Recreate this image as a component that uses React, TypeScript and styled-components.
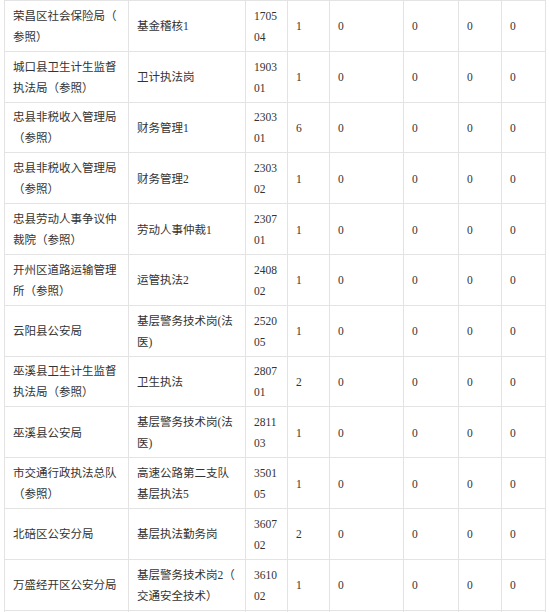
import styled, { createGlobalStyle } from 'styled-components';

const GlobalStyle = createGlobalStyle`
  html, body {
    margin: 0;
    padding: 0;
    background: #fff;
  }
`;

const Page = styled.div`
  height: 612px;
  overflow: hidden;
  padding: 0 0 0 4px;
`;

const Table = styled.table`
  width: 542px;
  table-layout: fixed;
  border-collapse: collapse;
  font-family: 'Liberation Serif', 'Noto Sans CJK SC', serif;
  font-size: 11.5px;
  line-height: 21px;
  color: #333;
`;

const Row = styled.tr`
  height: 50.8px;
`;

const Cell = styled.td`
  border: 1px solid #e3e3e3;
  padding: 2px 8px 0 8px;
  vertical-align: middle;
  text-align: left;
  line-break: anywhere;
  word-break: break-all;
`;

const widths = [124, 117, 42, 42, 74, 55, 43, 44];

type Job = {
  unit: string;
  post: string;
  code: string;
  plan: string;
};

const jobs: Job[] = [
  { unit: '荣昌区社会保险局（参照）', post: '基金稽核1', code: '170504', plan: '1' },
  { unit: '城口县卫生计生监督执法局（参照）', post: '卫计执法岗', code: '190301', plan: '1' },
  { unit: '忠县非税收入管理局（参照）', post: '财务管理1', code: '230301', plan: '6' },
  { unit: '忠县非税收入管理局（参照）', post: '财务管理2', code: '230302', plan: '1' },
  { unit: '忠县劳动人事争议仲裁院（参照）', post: '劳动人事仲裁1', code: '230701', plan: '1' },
  { unit: '开州区道路运输管理所（参照）', post: '运管执法2', code: '240802', plan: '1' },
  { unit: '云阳县公安局', post: '基层警务技术岗(法医)', code: '252005', plan: '1' },
  { unit: '巫溪县卫生计生监督执法局（参照）', post: '卫生执法', code: '280701', plan: '2' },
  { unit: '巫溪县公安局', post: '基层警务技术岗(法医)', code: '281103', plan: '1' },
  { unit: '市交通行政执法总队（参照）', post: '高速公路第二支队基层执法5', code: '350105', plan: '1' },
  { unit: '北碚区公安分局', post: '基层执法勤务岗', code: '360702', plan: '2' },
  { unit: '万盛经开区公安分局', post: '基层警务技术岗2（交通安全技术）', code: '361002', plan: '1' },
];

export default function App() {
  return (
    <Page>
      <GlobalStyle />
      <Table>
        <colgroup>
          {widths.map((w, i) => (
            <col key={i} style={{ width: w }} />
          ))}
        </colgroup>
        <tbody>
          {jobs.map((j, i) => (
            <Row key={i}>
              <Cell>{j.unit}</Cell>
              <Cell>{j.post}</Cell>
              <Cell>{j.code}</Cell>
              <Cell>{j.plan}</Cell>
              <Cell>0</Cell>
              <Cell>0</Cell>
              <Cell>0</Cell>
              <Cell>0</Cell>
            </Row>
          ))}
          <Row>
            {widths.map((_, i) => (
              <Cell key={i} />
            ))}
          </Row>
        </tbody>
      </Table>
    </Page>
  );
}
